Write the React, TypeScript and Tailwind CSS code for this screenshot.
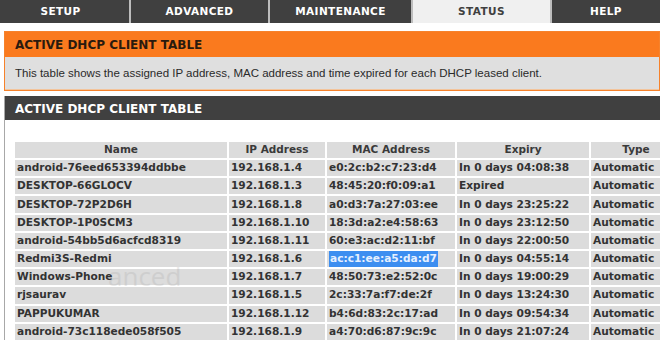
import React from "react";

const tabs = [
  { label: "SETUP", w: "w-[129px]", pr: "pr-[8px]" },
  { label: "ADVANCED", w: "w-[137px]", pr: "" },
  { label: "MAINTENANCE", w: "w-[141px]", pr: "" },
  { label: "STATUS", w: "w-[137px]", pr: "", active: true },
  { label: "HELP", w: "flex-1", pr: "" },
];

const clients = [
  ["android-76eed653394ddbbe", "192.168.1.4", "e0:2c:b2:c7:23:d4", "In 0 days 04:08:38"],
  ["DESKTOP-66GLOCV", "192.168.1.3", "48:45:20:f0:09:a1", "Expired"],
  ["DESKTOP-72P2D6H", "192.168.1.8", "a0:d3:7a:27:03:ee", "In 0 days 23:25:22"],
  ["DESKTOP-1P0SCM3", "192.168.1.10", "18:3d:a2:e4:58:63", "In 0 days 23:12:50"],
  ["android-54bb5d6acfcd8319", "192.168.1.11", "60:e3:ac:d2:11:bf", "In 0 days 22:00:50"],
  ["Redmi3S-Redmi", "192.168.1.6", "ac:c1:ee:a5:da:d7", "In 0 days 04:55:14"],
  ["Windows-Phone", "192.168.1.7", "48:50:73:e2:52:0c", "In 0 days 19:00:29"],
  ["rjsaurav", "192.168.1.5", "2c:33:7a:f7:de:2f", "In 0 days 13:24:30"],
  ["PAPPUKUMAR", "192.168.1.12", "b4:6d:83:2c:17:ad", "In 0 days 09:54:34"],
  ["android-73c118ede058f505", "192.168.1.9", "a4:70:d6:87:9c:9c", "In 0 days 21:07:24"],
];

const cols = "grid grid-cols-[212px_96px_128px_132px_90px] gap-[2px]";

export default function App() {
  return (
    <div className="relative w-[660px] h-[340px] overflow-hidden bg-white font-['DejaVu_Sans',sans-serif]">
      {/* top nav */}
      <div className="flex h-[23px] bg-[#bdbdbd] gap-[2px]">
        {tabs.map((t) => (
          <div
            key={t.label}
            className={`${t.w} ${t.pr} flex items-center justify-center pt-[1px] text-[10.5px] font-bold tracking-[0.4px] ${
              t.active ? "bg-[#f0f0f0] text-[#404040]" : "bg-[#404040] text-white"
            }`}
          >
            {t.label}
          </div>
        ))}
      </div>

      <div className="pl-[4px] pt-[8px]">
        {/* intro box */}
        <div className="border border-[#f6822b]">
          <div className="h-[25px] bg-[#fa7a1e] flex items-center pl-[10px] pt-[1px] text-[12px] font-bold text-[#2a1a0e]">
            ACTIVE DHCP CLIENT TABLE
          </div>
          <div className="h-[33px] bg-[#dfdfdf] flex items-center pl-[10px] pt-[2px] text-[11.5px] text-[#2a2a2a] font-['Liberation_Sans',sans-serif] border-b border-[#f3c49b]">
            This table shows the assigned IP address, MAC address and time expired for each DHCP leased client.
          </div>
        </div>

        {/* client list */}
        <div className="mt-[5px] border-l border-[#a8a8a8]">
          <div className="h-[24px] bg-[#404040] flex items-center pl-[10px] pt-[1px] text-[12px] font-bold text-white">
            ACTIVE DHCP CLIENT TABLE
          </div>
          <div className="pt-[22px] pl-[10px]">
            <div className={`${cols} text-[10.5px] font-bold text-[#333]`}>
              {["Name", "IP Address", "MAC Address", "Expiry", "Type"].map((h) => (
                <div key={h} className="h-[16px] bg-[#dcdcdc] flex items-center justify-center text-[#3a3a3a]">
                  {h}
                </div>
              ))}
            </div>
            {clients.map((c) => (
              <div key={c[0]} className={`${cols} mt-[2px] text-[10.6px] font-bold text-[#333]`}>
                {[...c, "Automatic"].map((v, i) => (
                  <div key={i} className="h-[16.2px] bg-[#dcdcdc] flex items-center pl-[2px] whitespace-nowrap">
                    {v === "ac:c1:ee:a5:da:d7" ? (
                      <span className="bg-[#3d8ef0] text-[#e6f0ff] px-[1px]">{v}</span>
                    ) : (
                      v
                    )}
                  </div>
                ))}
              </div>
            ))}
          </div>
        </div>
      </div>

      {/* faint video watermark */}
      <div className="absolute left-[108px] top-[257px] text-[26px] text-[#9a9a9a] opacity-20 font-['Open_Sans',sans-serif] pointer-events-none">
        anced
      </div>
    </div>
  );
}
